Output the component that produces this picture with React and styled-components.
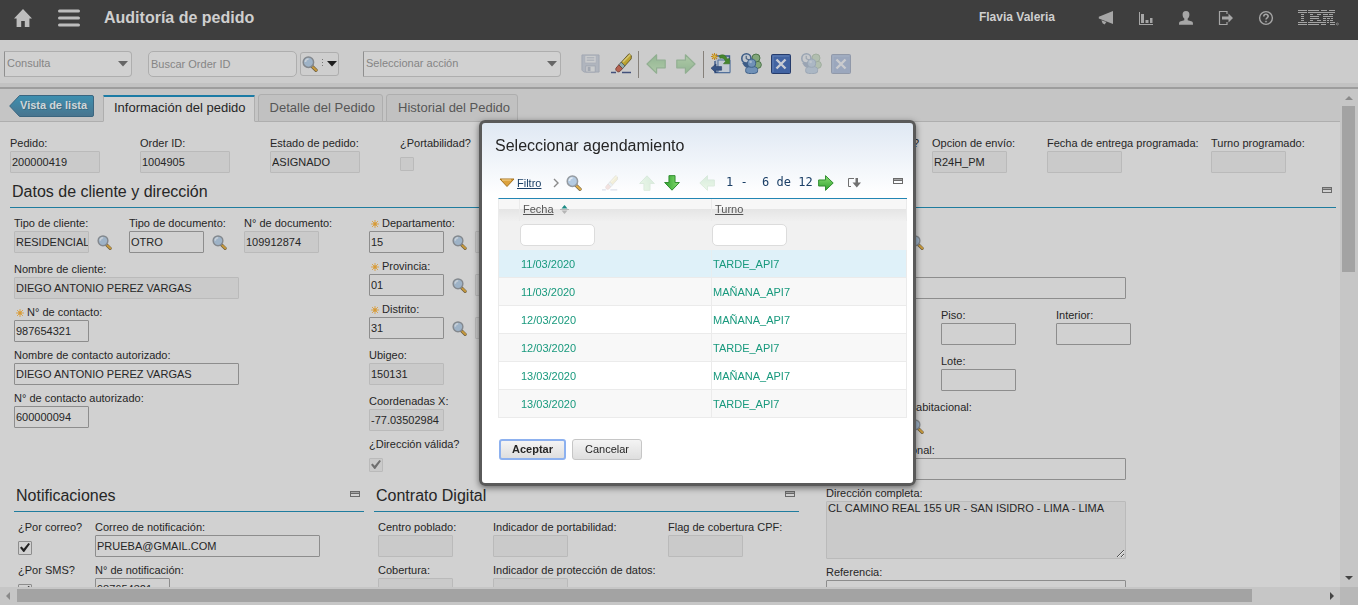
import React, { useId } from 'react';
import styled, { createGlobalStyle, css } from 'styled-components';

const Global = createGlobalStyle`
  * { box-sizing: border-box; }
  html, body { margin: 0; height: 100%; }
  body {
    background: #d1d1d1;
    color: #262626;
    font: 11px/15px "Liberation Sans", Arial, sans-serif;
    overflow: hidden;
  }
  button, input, select, textarea { font: inherit; color: inherit; margin: 0; }
  svg { display: block; flex: none; }
`;

/* ---------- page frame ---------- */

const Shell = styled.div`
  display: flex;
  flex-direction: column;
  height: 100vh;
`;

const TopBar = styled.header`
  display: flex;
  align-items: center;
  flex: none;
  height: 40px;
  padding: 0 19px 5px 14px;
  background: #3e3e3e;
  color: #cfcfcf;
`;

const PlainButton = styled.button`
  display: inline-flex;
  align-items: center;
  padding: 0;
  border: 0;
  background: none;
  cursor: pointer;
`;

const AppTitle = styled.h1`
  flex: 1;
  margin: 0 0 0 24px;
  font-size: 16px;
  line-height: 20px;
  font-weight: bold;
`;

const MenuButton = styled(PlainButton)`
  margin-left: 26px;
`;

const UserName = styled.span`
  margin-right: 43px;
  font-size: 12px;
  font-weight: bold;
`;

const TopIcons = styled.nav`
  display: flex;
  align-items: center;
  gap: 24px;
`;

const Toolbar = styled.div`
  display: flex;
  align-items: center;
  flex: none;
  height: 49px;
  padding: 0 4px 2px;
  background: linear-gradient(#cccccc 0 43px, #c2c2c2 43px 47px, #9d9d9d 47px 49px);
`;

const SelectBox = styled.div`
  display: grid;
  align-items: center;
  width: ${(p) => p.$width}px;
  margin-right: ${(p) => p.$after}px;
  select, svg { grid-area: 1 / 1; }
  svg { justify-self: end; margin-right: 4px; pointer-events: none; }
  select {
    width: 100%;
    height: 26px;
    padding: 0 20px 0 2px;
    border: 1px solid #aeaeae;
    border-left-color: #8f8f8f;
    border-radius: 0 4px 4px 0;
    background: #d1d1d1;
    color: #858585;
    appearance: none;
  }
`;

const SearchInput = styled.input`
  width: 149px;
  height: 26px;
  margin-right: 3px;
  padding: 0 2px;
  border: 1px solid #aeaeae;
  border-radius: 5px;
  background: #d1d1d1;
  &::placeholder { color: #858585; opacity: 1; }
`;

const SearchButton = styled.button`
  display: flex;
  align-items: center;
  gap: 4px;
  width: 39px;
  height: 24px;
  margin-right: 24px;
  padding: 0 1px;
  border: 1px solid #aeaeae;
  border-radius: 3px;
  background: #cecece;
  svg { filter: brightness(0.88); }
`;

const ToolIcons = styled.div`
  display: flex;
  align-items: center;
  gap: 10px;
  margin-left: 20px;
`;

const ToolButton = styled(PlainButton)`
  width: 20px;
  height: 20px;
  opacity: ${(p) => (p.disabled ? 0.35 : 1)};
  filter: brightness(0.88);
`;

const Divider = styled.span`
  width: 1px;
  height: 27px;
  margin: 2px -3px 0;
  background: #85807a;
`;

const Workspace = styled.div`
  flex: 1;
  min-height: 0;
  display: grid;
  grid-template-columns: minmax(0, 1fr) 18px;
  grid-template-rows: minmax(0, 1fr) 18px;
`;

const Pane = styled.main`
  display: flex;
  flex-direction: column;
  min-width: 0;
  overflow: hidden;
`;

const VScroll = styled.div`
  display: flex;
  flex-direction: column;
  align-items: center;
  justify-content: space-between;
  padding: 5px 1px 5px 0;
  background: #c6c6c6;
`;

const VThumb = styled.div`
  width: 13px;
  height: 34%;
  margin: 4px 0 auto;
  background: #a3a3a3;
`;

const HScroll = styled.div`
  display: flex;
  align-items: center;
  justify-content: space-between;
  padding: 0 6px 1px;
  background: #c6c6c6;
`;

const HThumb = styled.div`
  width: 93%;
  height: 13px;
  margin: 0 auto 0 3px;
  background: #a3a3a3;
`;

const Corner = styled.div`
  background: #b8b8b8;
`;

/* ---------- tabs ---------- */

const TabBar = styled.div`
  display: flex;
  align-items: flex-end;
  flex: none;
  height: 33px;
  padding-left: 9px;
  background: #c5c5c5;
  box-shadow: inset 0 -1px #aeaeae;
`;

const ListViewButton = styled(PlainButton)`
  display: grid;
  align-self: center;
  width: 85px;
  height: 22px;
  margin-right: 9px;
  color: #d0d6d9;
  font-weight: bold;
  svg, span { grid-area: 1 / 1; }
  span { padding-left: 11px; text-align: left; text-shadow: 1px 1px #3a6b80; }
`;

const Tab = styled.button`
  height: 28px;
  margin-right: 3px;
  padding: 0 7px 0 11px;
  border: 1px solid #aeaeae;
  border-radius: 3px 3px 0 0;
  background: #c1c1c1;
  color: #565656;
  font-size: 13px;
  line-height: 16px;
  white-space: nowrap;
  ${(p) =>
    p.$active &&
    css`
      height: 27px;
      padding: 0 8px 2px 10px;
      border-top: 2px solid #1b7ba5;
      border-bottom-color: #d1d1d1;
      border-radius: 1px 1px 0 0;
      background: #d1d1d1;
      color: #262626;
    `}
`;

/* ---------- forms ---------- */

const Form = styled.form`
  flex: 1;
  min-height: 0;
  overflow: hidden;
  padding: 14px 4px 0 10px;
`;

const SummaryRow = styled.div`
  display: grid;
  grid-template-columns: 130px 130px 130px 130px 402px 115px 164px auto;
  margin-bottom: 3px;
`;

const Hidden = styled.div`
  justify-self: end;
  padding-right: 13px;
`;

const FieldBox = styled.div`
  display: flex;
  flex-direction: column;
  align-items: flex-start;
`;

const Label = styled.label`
  display: flex;
  align-items: center;
  height: 15px;
  white-space: nowrap;
  svg { margin: 0 3px 0 2px; }
`;

const Control = styled.div`
  display: flex;
  align-items: center;
  gap: 8px;
  height: ${(p) => (p.$tall ? 'auto' : '22px')};
  svg { filter: brightness(0.88); }
`;

const boxLook = css`
  border: 1px solid #8d8d8d;
  border-radius: 1px;
  background: #d1d1d1;
  &:read-only, &:disabled { border-color: #bababa; background: #cacaca; }
`;

const TextInput = styled.input`
  ${boxLook}
  width: ${(p) => p.$width}px;
  height: 22px;
  padding: 0 0 0 1px;
`;

const TextArea = styled.textarea`
  ${boxLook}
  display: block;
  width: 300px;
  height: 58px;
  padding: 0 1px;
  line-height: 12px;
`;

const CheckInput = styled.input`
  appearance: none;
  width: 14px;
  height: 14px;
  margin-top: 4px;
  padding: 1px;
  border: 1px solid ${(p) => (p.disabled ? '#bababa' : '#8d8d8d')};
  border-radius: 1px;
  background: ${(p) => (p.disabled ? '#cacaca' : '#d1d1d1')};
  &:checked::before {
    content: '';
    display: block;
    width: 10px;
    height: 9px;
    background: ${(p) => (p.disabled ? '#6f6f6f' : '#222')};
    clip-path: polygon(0 52%, 16% 38%, 37% 64%, 84% 0, 100% 10%, 42% 100%, 34% 100%);
  }
`;

const SectionHead = styled.div`
  display: flex;
  align-items: center;
  justify-content: space-between;
  height: 32px;
  padding: 1px 4px 0 2px;
  border-bottom: 1px solid #1f7c9e;
  button { margin-bottom: 4px; }
`;

const SectionTitle = styled.h2`
  margin: 0;
  font-size: 16px;
  line-height: 20px;
  font-weight: normal;
`;

const Columns = styled.div`
  display: flex;
  align-items: flex-start;
`;

const ClientBody = styled(Columns)`
  padding: 8px 4px;
`;

const LeftArea = styled.div`
  flex: none;
  width: 812px;
`;

const Stack = styled.div`
  display: flex;
  flex-direction: column;
  flex: none;
  gap: ${(p) => p.$gap}px;
  width: ${(p) => (p.$width ? `${p.$width}px` : 'auto')};
`;

const Cells = styled.div`
  display: grid;
  grid-template-columns: ${(p) => p.$cols};
  margin-bottom: ${(p) => p.$after || 0}px;
`;

const Panels = styled(Columns)`
  gap: 10px;
  margin-top: 6px;
`;

const Panel = styled.section`
  width: ${(p) => p.$width}px;
`;

const PanelBody = styled.div`
  display: grid;
  grid-template-columns: ${(p) => p.$cols};
  row-gap: 6px;
  padding: 8px 4px 0;
`;

/* ---------- dialog ---------- */

const Overlay = styled.div`
  position: fixed;
  inset: 0;
  display: flex;
  align-items: center;
  justify-content: center;
  padding-left: 37px;
`;

const Dialog = styled.div`
  width: 437px;
  padding: 13px 6px 23px 16px;
  border: 3px solid #5a5a5a;
  border-radius: 6px;
  background: linear-gradient(#dfe8f3, #ffffff 72px);
  box-shadow: 0 2px 6px rgba(0, 0, 0, 0.5);
`;

const DialogTitle = styled.h2`
  margin: 0 0 12px -3px;
  font-size: 16px;
  line-height: 20px;
  font-weight: normal;
`;

const TableTools = styled.div`
  display: grid;
  grid-template-columns: 19px 36px 13px 36px 37px 25px 35px 27px 92px 29px 1fr 14px;
  align-items: center;
  height: 30px;
  > :last-child { padding-bottom: 3px; }
`;

const FilterLink = styled.a`
  padding-top: 2px;
  color: #1b3f66;
`;

const PageCount = styled.span`
  color: #1b3f66;
  font-family: "DejaVu Sans Mono", monospace;
  font-size: 12px;
  white-space: pre;
`;

const Table = styled.table`
  width: 100%;
  table-layout: fixed;
  border-collapse: separate;
  border-spacing: 0;
  border-top: 1px solid #2386b4;
  border-left: 1px solid #ebebeb;
  th, td {
    padding: 0 1px;
    border-right: 1px solid #ebebeb;
    text-align: left;
    font-weight: normal;
  }
`;

const HeadRow = styled.tr`
  height: 22px;
  background: linear-gradient(#f7f7f7 0 10px, #e5e5e5 10px, #f0f0f0);
  color: #555;
  th button { gap: 6px; padding-left: 2px; text-decoration: underline; }
`;

const FilterRow = styled.tr`
  height: 29px;
  background: #f1f1f1;
  && td { padding: 0; border-right: 0; }
`;

const FilterInput = styled.input`
  display: block;
  width: 75px;
  height: 22px;
  border: 1px solid #dcdcdc;
  border-radius: 5px;
  background: #fff;
`;

const DataRow = styled.tr`
  height: 28px;
  background: ${(p) => (p.$selected ? '#dff1f9' : p.$odd ? '#fff' : '#f8f8f8')};
  color: #18997d;
  td { border-bottom: 1px solid #ebebeb; padding-top: 3px; }
  td:not(:last-child) { border-right-color: ${(p) => (p.$selected ? '#e6eef1' : '#ebebeb')}; }
  td:first-child { border-right: 0; }
`;

const Actions = styled.div`
  display: flex;
  gap: 6px;
  padding: 21px 0 0 1px;
`;

const ActionButton = styled.button`
  height: 21px;
  padding: 0 12px;
  border: 1px solid #c6c6c6;
  border-radius: 3px;
  background: linear-gradient(#f4f4f4, #dedede);
  line-height: 17px;
  ${(p) =>
    p.$primary &&
    css`
      padding: 0 11px;
      border: 2px solid #8db1ef;
      font-weight: bold;
    `}
`;

/* ---------- drawings ---------- */

const Magnifier = ({ size = 15 }) => (
  <svg width={size} height={size} viewBox="0 0 16 16">
    <path d="M10.2 10.6 14 14.2" stroke="#77694c" strokeWidth="3.4" strokeLinecap="round" />
    <path d="M11 11.2 14.2 14.2" stroke="#e0ad45" strokeWidth="2.2" strokeLinecap="round" />
    <circle cx="6.4" cy="6.2" r="5.2" fill="#b4cbe2" stroke="#959ba1" strokeWidth="1.5" />
    <path d="M3.4 6a3.2 3.200 0 0 1 3.200-3" stroke="#e2ebf4" strokeWidth="1.6" fill="none" />
  </svg>
);

const Caret = ({ color = '#666', size = 10 }) => (
  <svg width={size} height="6" viewBox="0 0 10 6"><path d="M0 0h10L5 5.6z" fill={color} /></svg>
);

const Star = () => (
  <svg width="8" height="8" viewBox="0 0 8 8">
    <path d="M4 0v8M0 4h8M1 1l6 6M7 1 1 7" stroke="#d9a550" strokeWidth="1" />
    <circle cx="4" cy="4" r="1.7" fill="#d79a35" />
  </svg>
);

const MinimizeMark = () => (
  <svg width="10" height="6" viewBox="0 0 10 6">
    <rect x="0.5" y="0.5" width="9" height="5" fill="none" stroke="#6a6a6a" />
    <path d="M1 1.5h8" stroke="#a4a4a4" />
    <path d="M0 2.5h10" stroke="#6a6a6a" />
  </svg>
);

const Arrow = ({ turn = 0, size = 20, faded }) => (
  <svg width={size} height={size} viewBox="0 0 20 20" opacity={faded ? 0.15 : 1}>
    <defs>
      <linearGradient id={`arrow${turn}`} x1="0" y1="0" x2="0" y2="1">
        <stop offset="0" stopColor="#8ade72" /><stop offset="1" stopColor="#2fa12f" />
      </linearGradient>
    </defs>
    <path transform={`rotate(${turn} 10 10)`} d="M.8 6.2h8.6V.8L19 10l-9.600 9.200v-5.400H.8z" fill={`url(#arrow${turn})`} stroke="#2c8a2c" strokeWidth="1.2" strokeLinejoin="round" />
  </svg>
);

const Eraser = ({ size = 21, faded }) => (
  <svg width={size} height={size} viewBox="0 0 21 21" opacity={faded ? 0.18 : 1}>
    <path d="M0 19.5h5M11 19.5h9" stroke="#4b5c8c" strokeWidth="1.4" />
    <path d="m10 9.500 8-8.800 2.400 2-.2 3.200-6.600 7.300z" fill="#d6b936" stroke="#5f5428" strokeWidth=".8" />
    <path d="m12 9 7.400-7.600" stroke="#f0e184" strokeWidth="1.4" />
    <path d="m7.800 11.800 2.400-2.600 3.800 3.700-2.500 2.800z" fill="#a8c4c2" stroke="#4f6260" strokeWidth=".8" />
    <path d="m7.800 11.800 3.700 3.900-2.700 2.800c-2 1.400-5-1.200-3.800-3.400z" fill="#cf6f5b" stroke="#7a3e33" strokeWidth=".8" />
  </svg>
);

const SaveIcon = () => (
  <svg width="19" height="19" viewBox="0 0 20 20">
    <path d="M1 1h18v18H3l-2-2z" fill="#8fa0bd" stroke="#5f7092" />
    <path d="M4 1.5h12v8H4z" fill="#e4e8ee" stroke="#7686a5" strokeWidth=".8" />
    <path d="M6 4h8M6 6.5h8" stroke="#5f7092" />
    <path d="M5 12.5h10V19H5z" fill="#e4e8ee" stroke="#5f7092" />
    <path d="M7 13.5h3V18H7z" fill="#5f7092" />
  </svg>
);

const RouteIcon = () => (
  <svg width="21" height="21" viewBox="0 0 21 21">
    <path d="M5 3h13.5v16.5H4V8" fill="#c8d4e6" stroke="#45679d" strokeWidth="1.4" />
    <path d="M7 7h12v12.5H7z" fill="#dbe4ef" stroke="#5d7fb0" />
    <path d="M8.5 2.5c4-1.8 7 .2 7.4 3.6l2.600-.6v5.300h-6l2-2.400c-.8-2.600-2.400-4-5.600-3.200z" fill="#4e9933" stroke="#3c7d26" strokeWidth=".6" />
    <path d="M0 15.2 5 11v2.600h5.600v3.600H5v2.600z" fill="#3f5f96" stroke="#2d4777" strokeWidth=".6" />
    <path d="M3.5 0v7M0 3.5h7M1 1l5 5M6 1 1 6" stroke="#e09a20" strokeWidth="1.1" />
    <circle cx="3.5" cy="3.5" r="1.3" fill="#f2d84e" />
  </svg>
);

const PeopleIcon = () => (
  <svg width="21" height="21" viewBox="0 0 21 21">
    <g stroke="#4f7d4c" strokeWidth=".9" fill="#94bd8b">
      <ellipse cx="16.4" cy="11.8" rx="4" ry="3.6" /><circle cx="15" cy="5" r="4" />
    </g>
    <path d="M3 9c2 4 4 5 6 4" stroke="#476a99" strokeWidth="4" fill="none" />
    <circle cx="5.4" cy="5.4" r="4.6" fill="#d9e0e8" stroke="#476a99" strokeWidth="1.6" />
    <path d="M5.2 2.8v3l2.600.8" stroke="#34557f" fill="none" />
    <path d="M5 19.500c-1.400-5 1.500-6 5.800-6s7 1 5.400 6c-2.400 1.600-9 1.600-11.200 0z" fill="#7fa5d0" stroke="#416795" strokeWidth=".9" />
    <circle cx="10.6" cy="10.2" r="4.1" fill="#7fa5d0" stroke="#416795" strokeWidth=".9" />
    <circle cx="9.6" cy="8.8" r="1.4" fill="#b9d0ea" />
  </svg>
);

const CloseIcon = () => (
  <svg width="20" height="20" viewBox="0 0 20 20">
    <rect x=".5" y=".5" width="19" height="19" rx="1" fill="#4a70b8" stroke="#2a437a" />
    <path d="M2 18V2h16" fill="none" stroke="#6e92ce" />
    <path d="m5.500 5.500 9 9M14.500 5.500l-9 9" stroke="#e2e7f0" strokeWidth="2.4" />
  </svg>
);

const HomeIcon = () => (
  <svg width="18" height="18" viewBox="0 0 18 18"><path d="M9 0 0 9.500h2.600V18h4.600v-6h3.600v6h4.600V9.500H18L9 0z" fill="#bdbdbd" /></svg>
);

const MenuIcon = () => (
  <svg width="22" height="18" viewBox="0 0 22 18"><path d="M1.500 2h19M1.500 9h19M1.500 16h19" stroke="#bdbdbd" strokeWidth="3" strokeLinecap="round" /></svg>
);

const MegaphoneIcon = () => (
  <svg width="16" height="16" viewBox="0 0 16 16" fill="#a6a6a6"><path d="M15 1v13L.8 8.600V6.800zM3.400 10.200l5 1.800-1.800 2.400-2-1.200z" /></svg>
);

const ChartIcon = () => (
  <svg width="16" height="16" viewBox="0 0 16 16" fill="#a6a6a6"><path d="M1 2h1v12h13v1H1zM3 4h3v9H3zM7.500 10h3v3h-3zM12 8h2.500v5H12z" /></svg>
);

const UserIcon = () => (
  <svg width="16" height="16" viewBox="0 0 16 16" fill="#a6a6a6"><path d="M8 1c2.400 0 3.600 1.500 3.400 4-.2 1.700-.8 2.800-1.700 3.600v1.600l4.300 1.400c.8.400 1 1.200 1 3.200H1c0-2 .2-2.800 1-3.200l4.300-1.400V8.600C5.400 7.800 4.800 6.700 4.600 5 4.400 2.500 5.600 1 8 1z" /></svg>
);

const ExitIcon = () => (
  <svg width="16" height="16" viewBox="0 0 16 16"><path d="M9 4V1.500H1.500v13H9V12" fill="none" stroke="#a6a6a6" strokeWidth="1.200" /><path d="M4 6.500h6.500v-3L15 8l-4.500 4.500v-3H4z" fill="#a6a6a6" /></svg>
);

const HelpIcon = () => (
  <svg width="16" height="16" viewBox="0 0 16 16" fill="none" stroke="#a6a6a6"><circle cx="8" cy="8" r="6.400" strokeWidth="1.400" /><path d="M5.800 6.500c0-3 4.400-2.900 4.400-.2C10.200 7.800 8 7.800 8 9.500" strokeWidth="1.600" /><circle cx="8" cy="11.600" r=".6" /></svg>
);

/* Each row lists [start, length] of the bars of the striped mark. */
const LOGO_BARS = [
  [[0, 9], [10, 11], [23, 6], [31, 6]],
  [[0, 9], [10, 13], [23, 7], [30, 7]],
  [[3, 3], [12, 3], [19, 4], [25, 5], [31, 4]],
  [[3, 3], [12, 9], [25, 10]],
  [[3, 3], [12, 9], [25, 3], [29, 3], [33, 2]],
  [[3, 3], [12, 3], [19, 4], [25, 3], [29, 2], [32, 3]],
  [[0, 9], [10, 13], [23, 5], [29, 2], [32, 5]],
  [[0, 9], [10, 11], [23, 5], [32, 5]],
];

const IbmLogo = () => (
  <svg width="41" height="16" viewBox="0 0 41 16" fill="#a4a4a4" role="img" aria-label="IBM">
    {LOGO_BARS.map((row, y) => row.map(([x, w]) => <rect key={`${x}-${y}`} x={x} y={y * 2} width={w} height="1" />))}
    <circle cx="39.400" cy="14" r="1" fill="none" stroke="#9c9c9c" strokeWidth=".7" />
  </svg>
);

const ListViewShape = () => (
  <svg width="85" height="22" viewBox="0 0 85 22">
    <defs>
      <linearGradient id="listview" x1="0" y1="0" x2="0" y2="1"><stop offset="0" stopColor="#3e90b0" /><stop offset="1" stopColor="#48748e" /></linearGradient>
    </defs>
    <path d="M10.500.5H83q1.500 0 1.500 1.500v18q0 1.500-1.500 1.500H10.500L.7 11z" fill="url(#listview)" stroke="#3b6680" />
  </svg>
);

const ScrollArrow = ({ d, color }) => (
  <svg width="8" height="8" viewBox="0 0 8 8"><path d={d} fill={color} /></svg>
);

/* ---------- composed parts ---------- */

function Field({ label, value = '', width = 75, required, readOnly, lookup, describe }) {
  const id = useId();
  return (
    <FieldBox>
      <Label htmlFor={id}>{required && <Star />}{label}</Label>
      <Control>
        <TextInput id={id} $width={width} defaultValue={value} readOnly={readOnly} />
        {lookup && <PlainButton type="button" aria-label={`Buscar ${label}`}><Magnifier /></PlainButton>}
        {describe && <TextInput $width={225} readOnly aria-label={`Descripción ${label}`} />}
      </Control>
    </FieldBox>
  );
}

function Check({ label, checked, disabled }) {
  const id = useId();
  return (
    <FieldBox>
      <Label htmlFor={id}>{label}</Label>
      <Control><CheckInput id={id} type="checkbox" defaultChecked={checked} disabled={disabled} /></Control>
    </FieldBox>
  );
}

function AreaField({ label, value }) {
  const id = useId();
  return (
    <FieldBox>
      <Label htmlFor={id}>{label}</Label>
      <Control $tall><TextArea id={id} defaultValue={value} readOnly /></Control>
    </FieldBox>
  );
}

function Heading({ children }) {
  return (
    <SectionHead>
      <SectionTitle>{children}</SectionTitle>
      <PlainButton type="button" aria-label={`Minimizar ${children}`}><MinimizeMark /></PlainButton>
    </SectionHead>
  );
}

const SLOTS = [
  ['11/03/2020', 'TARDE_API7'],
  ['11/03/2020', 'MAÑANA_API7'],
  ['12/03/2020', 'MAÑANA_API7'],
  ['12/03/2020', 'TARDE_API7'],
  ['13/03/2020', 'MAÑANA_API7'],
  ['13/03/2020', 'TARDE_API7'],
];

function ScheduleDialog() {
  return (
    <Overlay>
      <Dialog role="dialog" aria-label="Seleccionar agendamiento">
        <DialogTitle>Seleccionar agendamiento</DialogTitle>
        <TableTools>
          <PlainButton aria-label="Abrir filtro">
            <svg width="18" height="10" viewBox="0 0 18 10"><path d="M2 1h14L9 8.500z" fill="#dda23c" stroke="#a5731f" strokeLinejoin="round" /><path d="M4 2h9" stroke="#f4d595" /></svg>
          </PlainButton>
          <FilterLink href="#filtro">Filtro</FilterLink>
          <svg width="8" height="10" viewBox="0 0 8 10"><path d="m1 1 4 4-4 4" fill="none" stroke="#8a8a8a" strokeWidth="1.400" /></svg>
          <PlainButton aria-label="Buscar"><Magnifier size={16} /></PlainButton>
          <PlainButton aria-label="Borrar filtro" disabled><Eraser size={16} faded /></PlainButton>
          <PlainButton aria-label="Fila anterior" disabled><Arrow turn={-90} size={16} faded /></PlainButton>
          <PlainButton aria-label="Fila siguiente"><Arrow turn={90} size={16} /></PlainButton>
          <PlainButton aria-label="Página anterior" disabled><Arrow turn={180} size={16} faded /></PlainButton>
          <PageCount>{'1 -  6 de 12'}</PageCount>
          <PlainButton aria-label="Página siguiente"><Arrow size={16} /></PlainButton>
          <PlainButton aria-label="Descargar">
            <svg width="15" height="12" viewBox="0 0 15 12"><path d="M5 1.500H1.500v8H4M5 1.500h2" fill="none" stroke="#707070" /><path d="M8.500 1h2.500v4.500h3L9.800 10.500 5.500 5.500h3z" fill="#707070" /></svg>
          </PlainButton>
          <PlainButton aria-label="Minimizar tabla"><MinimizeMark /></PlainButton>
        </TableTools>
        <Table>
          <colgroup><col style={{ width: 21 }} /><col style={{ width: 192 }} /><col /></colgroup>
          <thead>
            <HeadRow>
              <th />
              <th>
                <PlainButton>Fecha
                  <svg width="9" height="9" viewBox="0 0 9 9"><path d="m4.500 0 3 3.400h-6z" fill="#1b8a84" /><path d="M0 4.500h9" stroke="#b5b5b5" /><path d="m4.500 9 3-3.400h-6z" fill="#b5b5b5" /></svg>
                </PlainButton>
              </th>
              <th><PlainButton>Turno</PlainButton></th>
            </HeadRow>
            <FilterRow>
              <td />
              <td><FilterInput aria-label="Filtrar fecha" /></td>
              <td><FilterInput aria-label="Filtrar turno" /></td>
            </FilterRow>
          </thead>
          <tbody>
            {SLOTS.map(([date, shift], i) => (
              <DataRow key={i} $selected={i === 0} $odd={i % 2 === 0}>
                <td /><td>{date}</td><td>{shift}</td>
              </DataRow>
            ))}
          </tbody>
        </Table>
        <Actions>
          <ActionButton $primary>Aceptar</ActionButton>
          <ActionButton>Cancelar</ActionButton>
        </Actions>
      </Dialog>
    </Overlay>
  );
}

function ClientSection() {
  return (
    <section>
      <Heading>Datos de cliente y dirección</Heading>
      <ClientBody>
        <LeftArea>
          <Columns>
            <Stack $gap={6} $width={355}>
              <Cells $cols="115px 115px auto" $after={3}>
                <Field label="Tipo de cliente:" value="RESIDENCIAL" readOnly lookup />
                <Field label="Tipo de documento:" value="OTRO" lookup />
                <Field label="N° de documento:" value="109912874" readOnly />
              </Cells>
              <Field label="Nombre de cliente:" value="DIEGO ANTONIO PEREZ VARGAS" width={225} readOnly />
              <Field label="N° de contacto:" value="987654321" required />
              <Field label="Nombre de contacto autorizado:" value="DIEGO ANTONIO PEREZ VARGAS" width={225} />
              <Field label="N° de contacto autorizado:" value="600000094" />
            </Stack>
            <Stack $gap={6}>
              <Field label="Departamento:" value="15" required lookup describe />
              <Field label="Provincia:" value="01" required lookup describe />
              <Cells $cols="auto" $after={3}><Field label="Distrito:" value="31" required lookup describe /></Cells>
              <Cells $cols="auto" $after={3}><Field label="Ubigeo:" value="150131" readOnly /></Cells>
              <Field label="Coordenadas X:" value="-77.03502984" readOnly />
              <Check label="¿Dirección válida?" checked disabled />
            </Stack>
          </Columns>
          <Panels>
            <Panel $width={350}>
              <Heading>Notificaciones</Heading>
              <PanelBody $cols="77px auto">
                <Check label="¿Por correo?" checked />
                <Field label="Correo de notificación:" value="PRUEBA@GMAIL.COM" width={225} />
                <Check label="¿Por SMS?" checked />
                <Field label="N° de notificación:" value="987654321" />
              </PanelBody>
            </Panel>
            <Panel $width={425}>
              <Heading>Contrato Digital</Heading>
              <PanelBody $cols="115px 175px auto">
                <Field label="Centro poblado:" readOnly />
                <Field label="Indicador de portabilidad:" readOnly />
                <Field label="Flag de cobertura CPF:" readOnly />
                <Field label="Cobertura:" readOnly />
                <Field label="Indicador de protección de datos:" readOnly />
              </PanelBody>
            </Panel>
          </Panels>
        </LeftArea>
        <Stack $gap={9}>
          <Field label="Tipo de vía:" lookup />
          <Field label="Nombre de vía:" width={300} />
          <Cells $cols="115px 115px auto">
            <Field label="Número:" /><Field label="Piso:" /><Field label="Interior:" />
          </Cells>
          <Cells $cols="115px auto">
            <Field label="Manzana:" /><Field label="Lote:" />
          </Cells>
          <Stack $gap={6}>
            <Field label="Tipo de conjunto habitacional:" lookup />
            <Field label="Conjunto habitacional:" width={300} />
            <AreaField label="Dirección completa:" value="CL CAMINO REAL 155 UR - SAN ISIDRO - LIMA - LIMA" />
            <Field label="Referencia:" width={300} />
          </Stack>
        </Stack>
      </ClientBody>
    </section>
  );
}

export default function App() {
  return (
    <Shell>
      <Global />
      <TopBar>
        <PlainButton aria-label="Inicio"><HomeIcon /></PlainButton>
        <MenuButton aria-label="Menú"><MenuIcon /></MenuButton>
        <AppTitle>Auditoría de pedido</AppTitle>
        <UserName>Flavia Valeria</UserName>
        <TopIcons>
          <PlainButton aria-label="Avisos"><MegaphoneIcon /></PlainButton>
          <PlainButton aria-label="Informes"><ChartIcon /></PlainButton>
          <PlainButton aria-label="Perfil"><UserIcon /></PlainButton>
          <PlainButton aria-label="Salir"><ExitIcon /></PlainButton>
          <PlainButton aria-label="Ayuda"><HelpIcon /></PlainButton>
          <IbmLogo />
        </TopIcons>
      </TopBar>
      <Toolbar>
        <SelectBox $width={128} $after={16}>
          <select aria-label="Consulta"><option>Consulta</option></select>
          <Caret />
        </SelectBox>
        <SearchInput aria-label="Buscar Order ID" placeholder="Buscar Order ID" />
        <SearchButton aria-label="Buscar">
          <Magnifier size={16} />
          <svg width="1" height="9" viewBox="0 0 1 9"><path d="M.5 0v9" stroke="#888" strokeDasharray="1 2" /></svg>
          <Caret color="#222" size={10} />
        </SearchButton>
        <SelectBox $width={198} $after={0}>
          <select aria-label="Seleccionar acción"><option>Seleccionar acción</option></select>
          <Caret />
        </SelectBox>
        <ToolIcons>
          <ToolButton aria-label="Guardar" disabled><SaveIcon /></ToolButton>
          <ToolButton aria-label="Borrar"><Eraser /></ToolButton>
          <Divider />
          <ToolButton aria-label="Anterior" disabled><Arrow turn={180} /></ToolButton>
          <ToolButton aria-label="Siguiente" disabled><Arrow /></ToolButton>
          <Divider />
          <ToolButton aria-label="Dirigir flujo"><RouteIcon /></ToolButton>
          <ToolButton aria-label="Asignar"><PeopleIcon /></ToolButton>
          <ToolButton aria-label="Cancelar pedido"><CloseIcon /></ToolButton>
          <ToolButton aria-label="Reasignar" disabled><PeopleIcon /></ToolButton>
          <ToolButton aria-label="Rechazar" disabled><CloseIcon /></ToolButton>
        </ToolIcons>
      </Toolbar>
      <Workspace>
        <Pane>
          <TabBar>
            <ListViewButton><ListViewShape /><span>Vista de lista</span></ListViewButton>
            <Tab $active>Información del pedido</Tab>
            <Tab>Detalle del Pedido</Tab>
            <Tab>Historial del Pedido</Tab>
          </TabBar>
          <Form>
            <SummaryRow>
              <Field label="Pedido:" value="200000419" width={90} readOnly />
              <Field label="Order ID:" value="1004905" width={90} readOnly />
              <Field label="Estado de pedido:" value="ASIGNADO" width={90} readOnly />
              <Check label="¿Portabilidad?" disabled />
              <Hidden><Check label="¿Agendado?" disabled /></Hidden>
              <Field label="Opcion de envío:" value="R24H_PM" readOnly />
              <Field label="Fecha de entrega programada:" readOnly />
              <Field label="Turno programado:" readOnly />
            </SummaryRow>
            <ClientSection />
          </Form>
        </Pane>
        <VScroll>
          <ScrollArrow d="M0 6h8L4 2z" color="#8a8a8a" />
          <VThumb />
          <ScrollArrow d="M0 2h8L4 6z" color="#444" />
        </VScroll>
        <HScroll>
          <ScrollArrow d="M4 0v8L0 4z" color="#8a8a8a" />
          <HThumb />
          <ScrollArrow d="M4 0v8l4-4z" color="#444" />
        </HScroll>
        <Corner />
      </Workspace>
      <ScheduleDialog />
    </Shell>
  );
}
